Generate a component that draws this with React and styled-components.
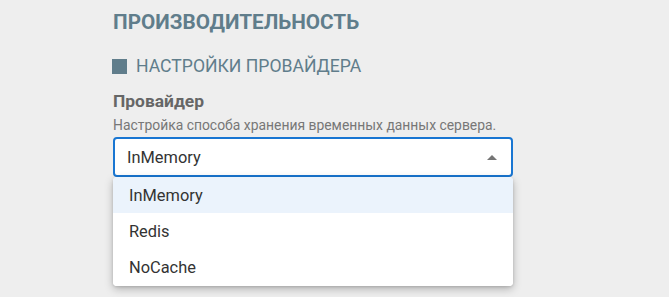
import React from 'react';
import styled, { createGlobalStyle } from 'styled-components';

const GlobalStyle = createGlobalStyle`
  html, body {
    margin: 0;
    padding: 0;
    background: #eeeeee;
    font-family: Roboto, "Noto Sans", sans-serif;
  }
`;

const Page = styled.div`
  width: 669px;
  height: 297px;
  overflow: hidden;
  padding: 10px 0 0 113px;
  box-sizing: border-box;
`;

const Title = styled.h2`
  margin: 0;
  font-size: 20.7px;
  font-weight: 700;
  line-height: 24px;
  color: #607d8b;
`;

const Section = styled.div`
  display: flex;
  align-items: center;
  gap: 9px;
  margin: 20px 0 0 -1px;
  color: #607d8b;
  font-size: 17.6px;
  line-height: 24px;
`;

const Square = styled.span`
  width: 15px;
  height: 15px;
  background: #607d8b;
`;

const Label = styled.div`
  margin-top: 12px;
  font-size: 17.4px;
  font-weight: 700;
  color: #666666;
  line-height: 22px;
`;

const Hint = styled.div`
  margin-top: 5px;
  font-size: 13.9px;
  color: #777777;
  line-height: 17px;
`;

const Field = styled.div`
  position: relative;
  width: 400px;
  margin-top: 3px;
`;

const SelectBox = styled.div`
  height: 40px;
  box-sizing: border-box;
  border: 2px solid #1976d2;
  border-radius: 4px;
  background: #ffffff;
  display: flex;
  align-items: center;
  justify-content: space-between;
  padding: 0 14px 0 12px;
  font-size: 16.4px;
  color: #333333;
`;

const Arrow = styled.span`
  width: 0;
  height: 0;
  border-left: 5px solid transparent;
  border-right: 5px solid transparent;
  border-bottom: 5px solid #757575;
`;

const Behind = styled.div`
  margin-top: 22px;
  padding-left: 14px;
  font-size: 16px;
  font-weight: 700;
  color: #666666;
`;

const Menu = styled.ul`
  position: absolute;
  top: 40px;
  left: 0;
  right: 0;
  margin: 0;
  padding: 0;
  list-style: none;
  background: #ffffff;
  border-radius: 4px;
  box-shadow: 0 3px 8px rgba(0, 0, 0, 0.25), 0 1px 3px rgba(0, 0, 0, 0.12);
  overflow: hidden;
`;

const Option = styled.li`
  height: 36.3px;
  display: flex;
  align-items: center;
  padding-left: 16px;
  font-size: 16.4px;
  color: #333333;
  background: ${p => (p.$active ? '#ebf3fc' : '#ffffff')};
`;

const options = ['InMemory', 'Redis', 'NoCache'];

export default function App() {
  return (
    <>
      <GlobalStyle />
      <Page>
        <Title>ПРОИЗВОДИТЕЛЬНОСТЬ</Title>
        <Section>
          <Square />
          НАСТРОЙКИ ПРОВАЙДЕРА
        </Section>
        <Label>Провайдер</Label>
        <Hint>Настройка способа хранения временных данных сервера.</Hint>
        <Field>
          <SelectBox>
            InMemory
            <Arrow />
          </SelectBox>
          <Behind>Строка подключения</Behind>
          <Behind>Время жизни</Behind>
          <Menu>
            {options.map((o, i) => (
              <Option key={o} $active={i === 0}>{o}</Option>
            ))}
          </Menu>
        </Field>
      </Page>
    </>
  );
}
